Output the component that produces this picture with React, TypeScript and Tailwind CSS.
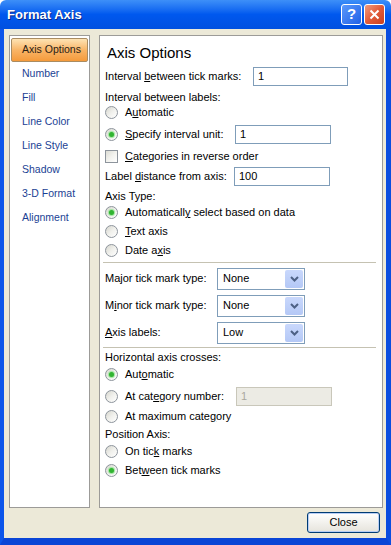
import type { ReactNode } from "react";

const navItems = [
  "Axis Options",
  "Number",
  "Fill",
  "Line Color",
  "Line Style",
  "Shadow",
  "3-D Format",
  "Alignment",
];

function Radio({ checked }: { checked?: boolean }) {
  return (
    <span className="flex h-[13px] w-[13px] shrink-0 items-center justify-center rounded-full border border-[#8d949c] bg-gradient-to-br from-[#d6d6ce] via-[#f0f0ec] to-white">
      {checked && (
        <span className="h-[5px] w-[5px] rounded-full bg-[#31b431] shadow-[0_0_1px_1px_#9be39b]" />
      )}
    </span>
  );
}

function Check() {
  return (
    <span className="h-[13px] w-[13px] shrink-0 border border-[#8d949c] bg-gradient-to-br from-[#dcdcd4] via-[#f2f2ee] to-white" />
  );
}

function Field({ value, className, disabled }: { value: string; className: string; disabled?: boolean }) {
  return (
    <div
      className={`flex h-[19px] items-center border pl-[4px] ${
        disabled ? "border-[#c9c7ba] bg-[#ecebe4] text-[#a9a89f]" : "border-[#7f9db9] bg-white"
      } ${className}`}
    >
      {value}
    </div>
  );
}

function Select({ value }: { value: string }) {
  return (
    <div className="flex h-[22px] w-[88px] items-center border border-[#7f9db9] bg-white">
      <span className="flex-1 pl-[5px]">{value}</span>
      <span className="mr-[1px] flex h-[18px] w-[18px] items-center justify-center rounded-[2px] bg-gradient-to-b from-[#c9d8fc] to-[#b4c8f6]">
        <svg width="9" height="6" viewBox="0 0 9 6">
          <path d="M1 1 L4.5 4.5 L8 1" fill="none" stroke="#4d6185" strokeWidth="2" />
        </svg>
      </span>
    </div>
  );
}

function Row({ className, children }: { className: string; children: ReactNode }) {
  return <div className={`flex h-[15px] items-center ${className}`}>{children}</div>;
}

function Sep({ className }: { className: string }) {
  return <div className={`-ml-[2px] h-[2px] w-[273px] border-t border-b border-t-[#c5c2b2] border-b-white ${className}`} />;
}

export default function App() {
  return (
    <div
      className="flex h-[545px] w-[391px] flex-col text-[11px] text-black"
      style={{ fontFamily: '"Liberation Sans", Arial, sans-serif' }}
    >
      {/* title bar */}
      <div className="flex h-[29px] shrink-0 items-center rounded-t-[6px] bg-gradient-to-b from-[#3d8ff8] via-[#0058ee] to-[#0050e0] pl-[7px] pr-[6px]">
        <span className="flex-1 text-[13px] font-bold text-white [text-shadow:1px_1px_0_#0a2a8a]">
          Format Axis
        </span>
        <div className="flex h-[21px] w-[21px] items-center justify-center rounded-[3px] border border-white bg-gradient-to-br from-[#5b99fb] to-[#1f5fe6] text-[15px] font-bold text-white">
          ?
        </div>
        <div className="ml-[2px] flex h-[21px] w-[21px] items-center justify-center rounded-[3px] border border-white bg-gradient-to-br from-[#f09a7c] via-[#e15a38] to-[#c9401f]">
          <svg width="11" height="11" viewBox="0 0 11 11">
            <path d="M1.5 1.5 L9.5 9.5 M9.5 1.5 L1.5 9.5" stroke="white" strokeWidth="2" />
          </svg>
        </div>
      </div>

      {/* body */}
      <div className="flex flex-1 flex-col overflow-hidden border-b-[7px] border-l-4 border-r-[5px] border-b-[#0a45d6] border-l-[#0c55ea] border-r-[#0a4ddf] bg-[#ece9d8]">
        <div className="mt-[6px] flex h-[473px] pl-[5px]">
          {/* nav */}
          <div className="w-[81px] flex-none border border-[#9c9b98] bg-white pt-[2px]">
            {navItems.map((item, i) => (
              <div
                key={item}
                className={
                  i === 0
                    ? "mx-[1px] flex h-[24px] items-center rounded-[2px] border border-[#a98c62] bg-gradient-to-b from-[#fde3b3] via-[#f9b566] to-[#f59a3a] pl-[10px] text-[10.5px] text-[#2a2115]"
                    : "mx-[1px] flex h-[24px] items-center pl-[11px] text-[10.5px] text-[#1b3f94]"
                }
              >
                {item}
              </div>
            ))}
          </div>

          {/* options */}
          <div className="ml-[9px] w-[284px] flex-none overflow-hidden border border-[#9c9b98] bg-white pl-[5px] pt-[10px]">
            <Row className="">
              <span className="pl-[2px] text-[15px]">Axis Options</span>
            </Row>
            <Row className="mt-[8px]">
              <span className="w-[148px]">
                Interval <span className="underline">b</span>etween tick marks:
              </span>
              <Field value="1" className="w-[95px]" />
            </Row>
            <Row className="mt-[6px]">Interval between labels:</Row>
            <Row className="">
              <Radio />
              <span className="ml-[7px]">
                A<span className="underline">u</span>tomatic
              </span>
            </Row>
            <Row className="mt-[7px]">
              <Radio checked />
              <span className="ml-[7px] w-[110px]">
                <span className="underline">S</span>pecify interval unit:
              </span>
              <Field value="1" className="w-[96px]" />
            </Row>
            <Row className="mt-[7px]">
              <Check />
              <span className="ml-[7px]">
                <span className="underline">C</span>ategories in reverse order
              </span>
            </Row>
            <Row className="mt-[5px]">
              <span className="w-[129px]">
                Label <span className="underline">d</span>istance from axis:
              </span>
              <Field value="100" className="w-[96px]" />
            </Row>
            <Row className="mt-[5px]">Axis Type:</Row>
            <Row className="mt-[1px]">
              <Radio checked />
              <span className="ml-[7px]">
                Automaticall<span className="underline">y</span> select based on data
              </span>
            </Row>
            <Row className="mt-[4px]">
              <Radio />
              <span className="ml-[7px]">
                <span className="underline">T</span>ext axis
              </span>
            </Row>
            <Row className="mt-[4px]">
              <Radio />
              <span className="ml-[7px]">
                Date a<span className="underline">x</span>is
              </span>
            </Row>
            <Sep className="mt-[4px]" />
            <Row className="mt-[7px]">
              <span className="w-[112px]">
                Ma<span className="underline">j</span>or tick mark type:
              </span>
              <Select value="None" />
            </Row>
            <Row className="mt-[12px]">
              <span className="w-[112px]">
                M<span className="underline">i</span>nor tick mark type:
              </span>
              <Select value="None" />
            </Row>
            <Row className="mt-[12px]">
              <span className="w-[112px]">
                <span className="underline">A</span>xis labels:
              </span>
              <Select value="Low" />
            </Row>
            <Sep className="mt-[7px]" />
            <Row className="mt-[1px]">Horizontal axis crosses:</Row>
            <Row className="mt-[2px]">
              <Radio checked />
              <span className="ml-[7px]">
                Aut<span className="underline">o</span>matic
              </span>
            </Row>
            <Row className="mt-[7px]">
              <Radio />
              <span className="ml-[7px] w-[111px]">
                At cat<span className="underline">e</span>gory number:
              </span>
              <Field value="1" className="w-[96px]" disabled />
            </Row>
            <Row className="mt-[5px]">
              <Radio />
              <span className="ml-[7px]">
                At maximum cate<span className="underline">g</span>ory
              </span>
            </Row>
            <Row className="mt-[3px]">Position Axis:</Row>
            <Row className="mt-[2px]">
              <Radio />
              <span className="ml-[7px]">
                On tic<span className="underline">k</span> marks
              </span>
            </Row>
            <Row className="mt-[4px]">
              <Radio checked />
              <span className="ml-[7px]">
                Bet<span className="underline">w</span>een tick marks
              </span>
            </Row>
          </div>
        </div>

        {/* footer */}
        <div className="mt-[4px] flex justify-end pr-[6px]">
          <button className="flex h-[21px] w-[73px] items-center justify-center rounded-[3px] border border-[#003c74] bg-gradient-to-b from-white to-[#e6e4dc] shadow-[inset_0_0_0_1px_#b8cef5] text-[11px]">
            Close
          </button>
        </div>
      </div>
    </div>
  );
}
